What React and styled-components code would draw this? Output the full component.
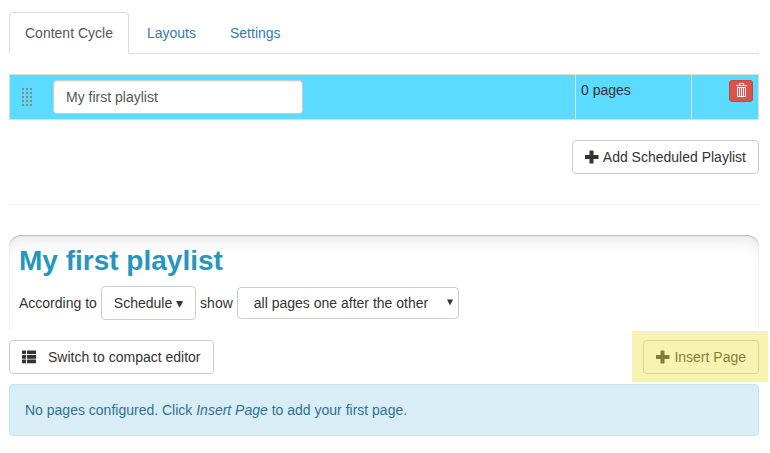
import React, { useState } from "react";
import styled, { createGlobalStyle, css } from "styled-components";

const GlobalStyle = createGlobalStyle`
  *, *::before, *::after { box-sizing: border-box; }
  body {
    margin: 0;
    background: #fff;
    color: #333;
    font: 14px/20px "Liberation Sans", Arial, sans-serif;
  }
  button, input, select { font: inherit; }
`;

const Page = styled.main`
  padding: 12px 11px 16px 9px;
`;

const Tabs = styled.nav`
  display: flex;
  gap: 2px;
  margin-bottom: 20px;
  border-bottom: 1px solid #ddd;
`;

const Tab = styled.a`
  margin-bottom: -1px;
  padding: 10px 15px;
  border: 1px solid transparent;
  border-radius: 4px 4px 0 0;
  color: #337ab7;
  text-decoration: none;
  ${({ $active }) =>
    $active &&
    css`
      border-color: #ddd #ddd #fff;
      background: #fff;
      color: #555;
    `}
`;

const PlaylistTable = styled.table`
  width: 100%;
  table-layout: fixed;
  border-collapse: collapse;
  background: #5bdbff;
`;

const Cell = styled.td`
  width: ${({ $width }) => $width || "auto"};
  padding: 5px;
  border: 1px solid #ddd;
  text-align: ${({ $align }) => $align || "left"};
  vertical-align: top;
`;

const NameField = styled.div`
  display: flex;
  align-items: center;
  gap: 21px;
  padding-left: 7px;
`;

const NameInput = styled.input`
  width: 250px;
  height: 34px;
  padding: 6px 12px;
  border: 1px solid #ccc;
  border-radius: 4px;
  background: #fff;
  color: #555;
  box-shadow: inset 0 1px 1px rgba(0, 0, 0, 0.08);
`;

const Button = styled.button`
  display: inline-flex;
  align-items: center;
  gap: ${({ $gap }) => $gap || "4px"};
  height: 34px;
  padding: 0 12px;
  border: 1px solid #ccc;
  border-radius: 4px;
  background: #fff;
  color: #333;
  white-space: nowrap;
  cursor: pointer;
`;

const DeleteButton = styled.button`
  display: inline-flex;
  align-items: center;
  justify-content: center;
  width: 24px;
  height: 22px;
  padding: 0 0 2px;
  border: 1px solid #d43f3a;
  border-radius: 3px;
  background: #d9534f;
  color: #fff;
  vertical-align: top;
  cursor: pointer;
`;

const Actions = styled.div`
  display: flex;
  justify-content: ${({ $spread }) => ($spread ? "space-between" : "flex-end")};
  margin: ${({ $spread }) => ($spread ? "10px 0" : "20px 0 30px")};
`;

const Divider = styled.hr`
  margin: 0 0 30px;
  border: 0;
  border-top: 1px solid #f3f3f3;
`;

const Panel = styled.section`
  padding: 10px;
  border-radius: 12px 12px 0 0;
  box-shadow: inset 0 1px 1px rgba(0, 0, 0, 0.2),
    inset 0 12px 16px -8px rgba(0, 0, 0, 0.12);
`;

const Title = styled.h1`
  margin: 0 0 9px;
  color: #2596be;
  font-size: 28px;
  line-height: 32px;
`;

const Sentence = styled.div`
  display: flex;
  align-items: center;
  gap: 4px;
`;

const SelectBox = styled.label`
  position: relative;
  color: #333;
`;

const Select = styled.select`
  display: block;
  width: 222px;
  height: 32px;
  padding: 0 24px 0 16px;
  border: 1px solid #ccc;
  border-radius: 4px;
  background: #fff;
  color: #333;
  appearance: none;
`;

const SelectArrow = styled.svg`
  position: absolute;
  top: 12px;
  right: 6px;
  pointer-events: none;
`;

const Highlight = styled.div`
  position: relative;
  &::after {
    content: "";
    position: absolute;
    inset: -9px -9px -8px -11px;
    background: rgba(238, 226, 68, 0.42);
    pointer-events: none;
  }
`;

const Notice = styled.div`
  padding: 15px;
  border: 1px solid #bce8f1;
  border-radius: 4px;
  background: #d9edf7;
  color: #31708f;
`;

const PlusIcon = () => (
  <svg width="14" height="14" viewBox="0 0 14 14" fill="currentColor" aria-hidden="true">
    <path d="M5 .5h3a.5.5 0 0 1 .5.5v4H13a.5.5 0 0 1 .5.5v3a.5.5 0 0 1-.5.5H8.500v4a.5.5 0 0 1-.5.5H5a.5.5 0 0 1-.5-.5V9H.5a.5.5 0 0 1-.5-.5v-3A.5.5 0 0 1 .5 5h4V1A.5.5 0 0 1 5 .5z" />
  </svg>
);

const ListIcon = () => (
  <svg width="14" height="14" viewBox="0 0 14 14" fill="currentColor" aria-hidden="true">
    {[0.4, 5, 9.6].map((y) => (
      <g key={y}>
        <rect x="0" y={y} width="4" height="3.700" rx=".3" />
        <rect x="5" y={y} width="9" height="3.700" rx=".3" />
      </g>
    ))}
  </svg>
);

const TrashIcon = () => (
  <svg width="11" height="14" viewBox="0 0 11 14" fill="none" stroke="currentColor" aria-hidden="true">
    <path d="M0 2.500h11M3.500 2V.5h4V2M1.500 4v9.500h8V4M1 4.500h9M3.500 5v8M5.500 5v8M7.500 5v8" />
  </svg>
);

const DragHandle = () => (
  <svg width="10" height="18" viewBox="0 0 10 18" fill="#888" role="img" aria-label="Drag to reorder">
    {[0, 4, 8, 12, 16].map((y) =>
      [0, 4, 8].map((x) => <rect key={`${x}-${y}`} x={x} y={y} width="2" height="2" />)
    )}
  </svg>
);

export default function App() {
  const [name, setName] = useState("My first playlist");

  return (
    <>
      <GlobalStyle />
      <Page>
        <Tabs>
          <Tab href="#content" aria-current="page" $active>Content Cycle</Tab>
          <Tab href="#layouts">Layouts</Tab>
          <Tab href="#settings">Settings</Tab>
        </Tabs>

        <PlaylistTable>
          <tbody>
            <tr>
              <Cell>
                <NameField>
                  <DragHandle />
                  <NameInput
                    aria-label="Playlist name"
                    value={name}
                    onChange={(event) => setName(event.target.value)}
                  />
                </NameField>
              </Cell>
              <Cell $width="116px">0 pages</Cell>
              <Cell $width="67px" $align="right">
                <DeleteButton type="button" aria-label="Delete playlist">
                  <TrashIcon />
                </DeleteButton>
              </Cell>
            </tr>
          </tbody>
        </PlaylistTable>

        <Actions>
          <Button type="button"><PlusIcon />Add Scheduled Playlist</Button>
        </Actions>
        <Divider />

        <Panel>
          <Title>{name}</Title>
          <Sentence>
            <span>According to</span>
            <Button type="button" aria-haspopup="menu">Schedule ▾</Button>
            <span>show</span>
            <SelectBox>
              <Select aria-label="Page order" defaultValue="all">
                <option value="all">all pages one after the other</option>
                <option value="one">one page per cycle</option>
              </Select>
              <SelectArrow width="6" height="7" viewBox="0 0 6 7" fill="currentColor" aria-hidden="true">
                <path d="M0 .5h6L3 6.500z" />
              </SelectArrow>
            </SelectBox>
          </Sentence>
        </Panel>

        <Actions $spread>
          <Button type="button" $gap="12px"><ListIcon />Switch to compact editor</Button>
          <Highlight>
            <Button type="button"><PlusIcon />Insert Page</Button>
          </Highlight>
        </Actions>

        <Notice role="status">
          No pages configured. Click <em>Insert Page</em> to add your first page.
        </Notice>
      </Page>
    </>
  );
}
